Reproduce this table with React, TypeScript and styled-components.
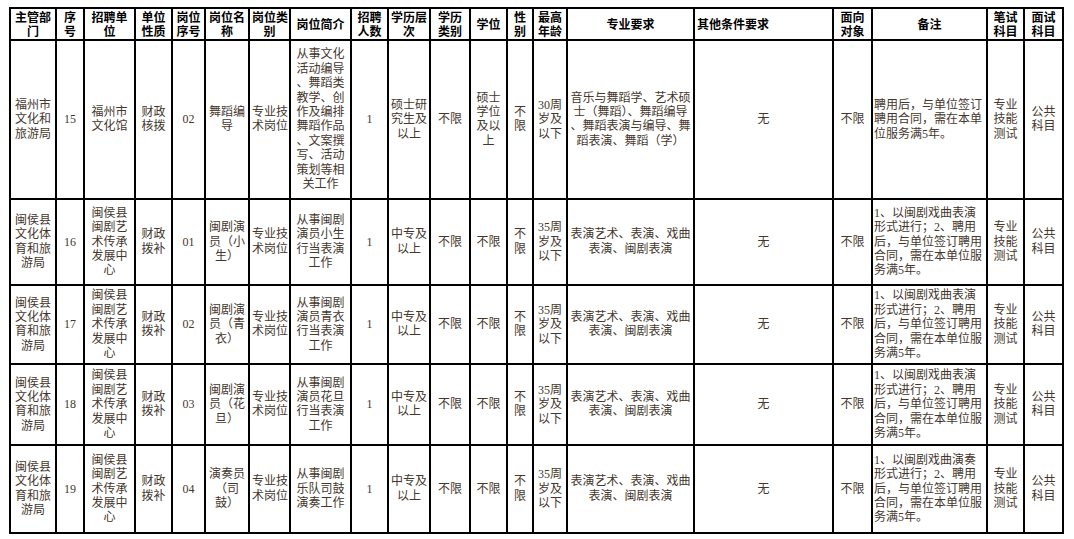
import React from "react";
import styled, { createGlobalStyle } from "styled-components";

const Global = createGlobalStyle`
  html, body { margin: 0; padding: 0; background: #ffffff; }
  body { font-family: "Liberation Serif", "Noto Sans CJK SC", serif; }
`;

const Page = styled.div`
  padding: 7px 0 0 9px;
`;

const Table = styled.table`
  table-layout: fixed;
  border-collapse: collapse;
  width: 1053px;
  border: 2px solid #000;
`;

const HeadCell = styled.th<{ $align?: "left" | "center" }>`
  border: 2px solid #000;
  padding: 1px 2px 0;
  font-family: "Noto Sans CJK SC", sans-serif;
  font-weight: 700;
  font-size: 12px;
  line-height: 14.4px;
  color: #000;
  text-align: ${(p) => p.$align ?? "center"};
  vertical-align: middle;
  white-space: nowrap;
  overflow: hidden;
`;

const Cell = styled.td<{ $align?: "left" | "center" }>`
  border: 2px solid #000;
  padding: 0 ${(p) => (p.$align === "left" ? "1px" : "2px")};
  font-family: "Liberation Serif", "Noto Sans CJK SC", serif;
  font-size: 12px;
  line-height: 14.4px;
  color: #45372d;
  text-align: ${(p) => p.$align ?? "center"};
  vertical-align: middle;
  white-space: nowrap;
  overflow: hidden;
`;

const Row = styled.tr<{ $h: number }>`
  height: ${(p) => p.$h}px;
`;

const Line = styled.span`
  display: block;
`;

type ColDef = { w: number; head: string[]; headAlign?: "left" | "center"; align?: "left" | "center" };

const cols: ColDef[] = [
  { w: 46, head: ["主管部", "门"] },
  { w: 28, head: ["序", "号"] },
  { w: 51, head: ["招聘单", "位"] },
  { w: 37, head: ["单位", "性质"] },
  { w: 33, head: ["岗位", "序号"] },
  { w: 44, head: ["岗位名", "称"] },
  { w: 41, head: ["岗位类", "别"] },
  { w: 61, head: ["岗位简介"] },
  { w: 37, head: ["招聘", "人数"] },
  { w: 42, head: ["学历层", "次"] },
  { w: 40, head: ["学历", "类别"] },
  { w: 37, head: ["学位"] },
  { w: 26, head: ["性", "别"] },
  { w: 34, head: ["最高", "年龄"] },
  { w: 127, head: ["专业要求"] },
  { w: 139, head: ["其他条件要求"], headAlign: "left" },
  { w: 39, head: ["面向", "对象"] },
  { w: 115, head: ["备注"], align: "left" },
  { w: 37, head: ["笔试", "科目"] },
  { w: 39, head: ["面试", "科目"] },
];

const minhouDept = ["闽侯县", "文化体", "育和旅", "游局"];
const minhouUnit = ["闽侯县", "闽剧艺", "术传承", "发展中", "心"];
const perfMajor = ["表演艺术、表演、戏曲", "表演、闽剧表演"];
const noteOf = (kind: string) => [
  `1、以闽剧戏曲${kind}`,
  "形式进行；2、聘用",
  "后，与单位签订聘用",
  "合同，需在本单位服",
  "务满5年。",
];

type RowDef = { h: number; cells: string[][] };

const rows: RowDef[] = [
  {
    h: 159,
    cells: [
      ["福州市", "文化和", "旅游局"],
      ["15"],
      ["福州市", "文化馆"],
      ["财政", "核拨"],
      ["02"],
      ["舞蹈编", "导"],
      ["专业技", "术岗位"],
      ["从事文化", "活动编导", "、舞蹈类", "教学、创", "作及编排", "舞蹈作品", "、文案撰", "写、活动", "策划等相", "关工作"],
      ["1"],
      ["硕士研", "究生及", "以上"],
      ["不限"],
      ["硕士", "学位", "及以", "上"],
      ["不", "限"],
      ["30周", "岁及", "以下"],
      ["音乐与舞蹈学、艺术硕", "士（舞蹈）、舞蹈编导", "、舞蹈表演与编导、舞", "蹈表演、舞蹈（学）"],
      ["无"],
      ["不限"],
      ["聘用后，与单位签订", "聘用合同，需在本单", "位服务满5年。"],
      ["专业", "技能", "测试"],
      ["公共", "科目"],
    ],
  },
  ...[
    { h: 86, no: "16", pos: "01", name: ["闽剧演", "员（小", "生）"], intro: ["从事闽剧", "演员小生", "行当表演", "工作"], kind: "表演" },
    { h: 79, no: "17", pos: "02", name: ["闽剧演", "员（青", "衣）"], intro: ["从事闽剧", "演员青衣", "行当表演", "工作"], kind: "表演" },
    { h: 81, no: "18", pos: "03", name: ["闽剧演", "员（花", "旦）"], intro: ["从事闽剧", "演员花旦", "行当表演", "工作"], kind: "表演" },
    { h: 88, no: "19", pos: "04", name: ["演奏员", "（司", "鼓）"], intro: ["从事闽剧", "乐队司鼓", "演奏工作"], kind: "演奏" },
  ].map((r) => ({
    h: r.h,
    cells: [
      minhouDept,
      [r.no],
      minhouUnit,
      ["财政", "拨补"],
      [r.pos],
      r.name,
      ["专业技", "术岗位"],
      r.intro,
      ["1"],
      ["中专及", "以上"],
      ["不限"],
      ["不限"],
      ["不", "限"],
      ["35周", "岁及", "以下"],
      perfMajor,
      ["无"],
      ["不限"],
      noteOf(r.kind),
      ["专业", "技能", "测试"],
      ["公共", "科目"],
    ],
  })),
];

export default function App() {
  return (
    <>
      <Global />
      <Page>
        <Table>
          <colgroup>
            {cols.map((c, i) => (
              <col key={i} style={{ width: c.w }} />
            ))}
          </colgroup>
          <thead>
            <Row $h={31}>
              {cols.map((c, i) => (
                <HeadCell key={i} $align={c.headAlign}>
                  {c.head.map((l, j) => (
                    <Line key={j}>{l}</Line>
                  ))}
                </HeadCell>
              ))}
            </Row>
          </thead>
          <tbody>
            {rows.map((r, ri) => (
              <Row key={ri} $h={r.h}>
                {r.cells.map((lines, ci) => (
                  <Cell key={ci} $align={cols[ci].align}>
                    {lines.map((l, j) => (
                      <Line key={j}>{l}</Line>
                    ))}
                  </Cell>
                ))}
              </Row>
            ))}
          </tbody>
        </Table>
      </Page>
    </>
  );
}
